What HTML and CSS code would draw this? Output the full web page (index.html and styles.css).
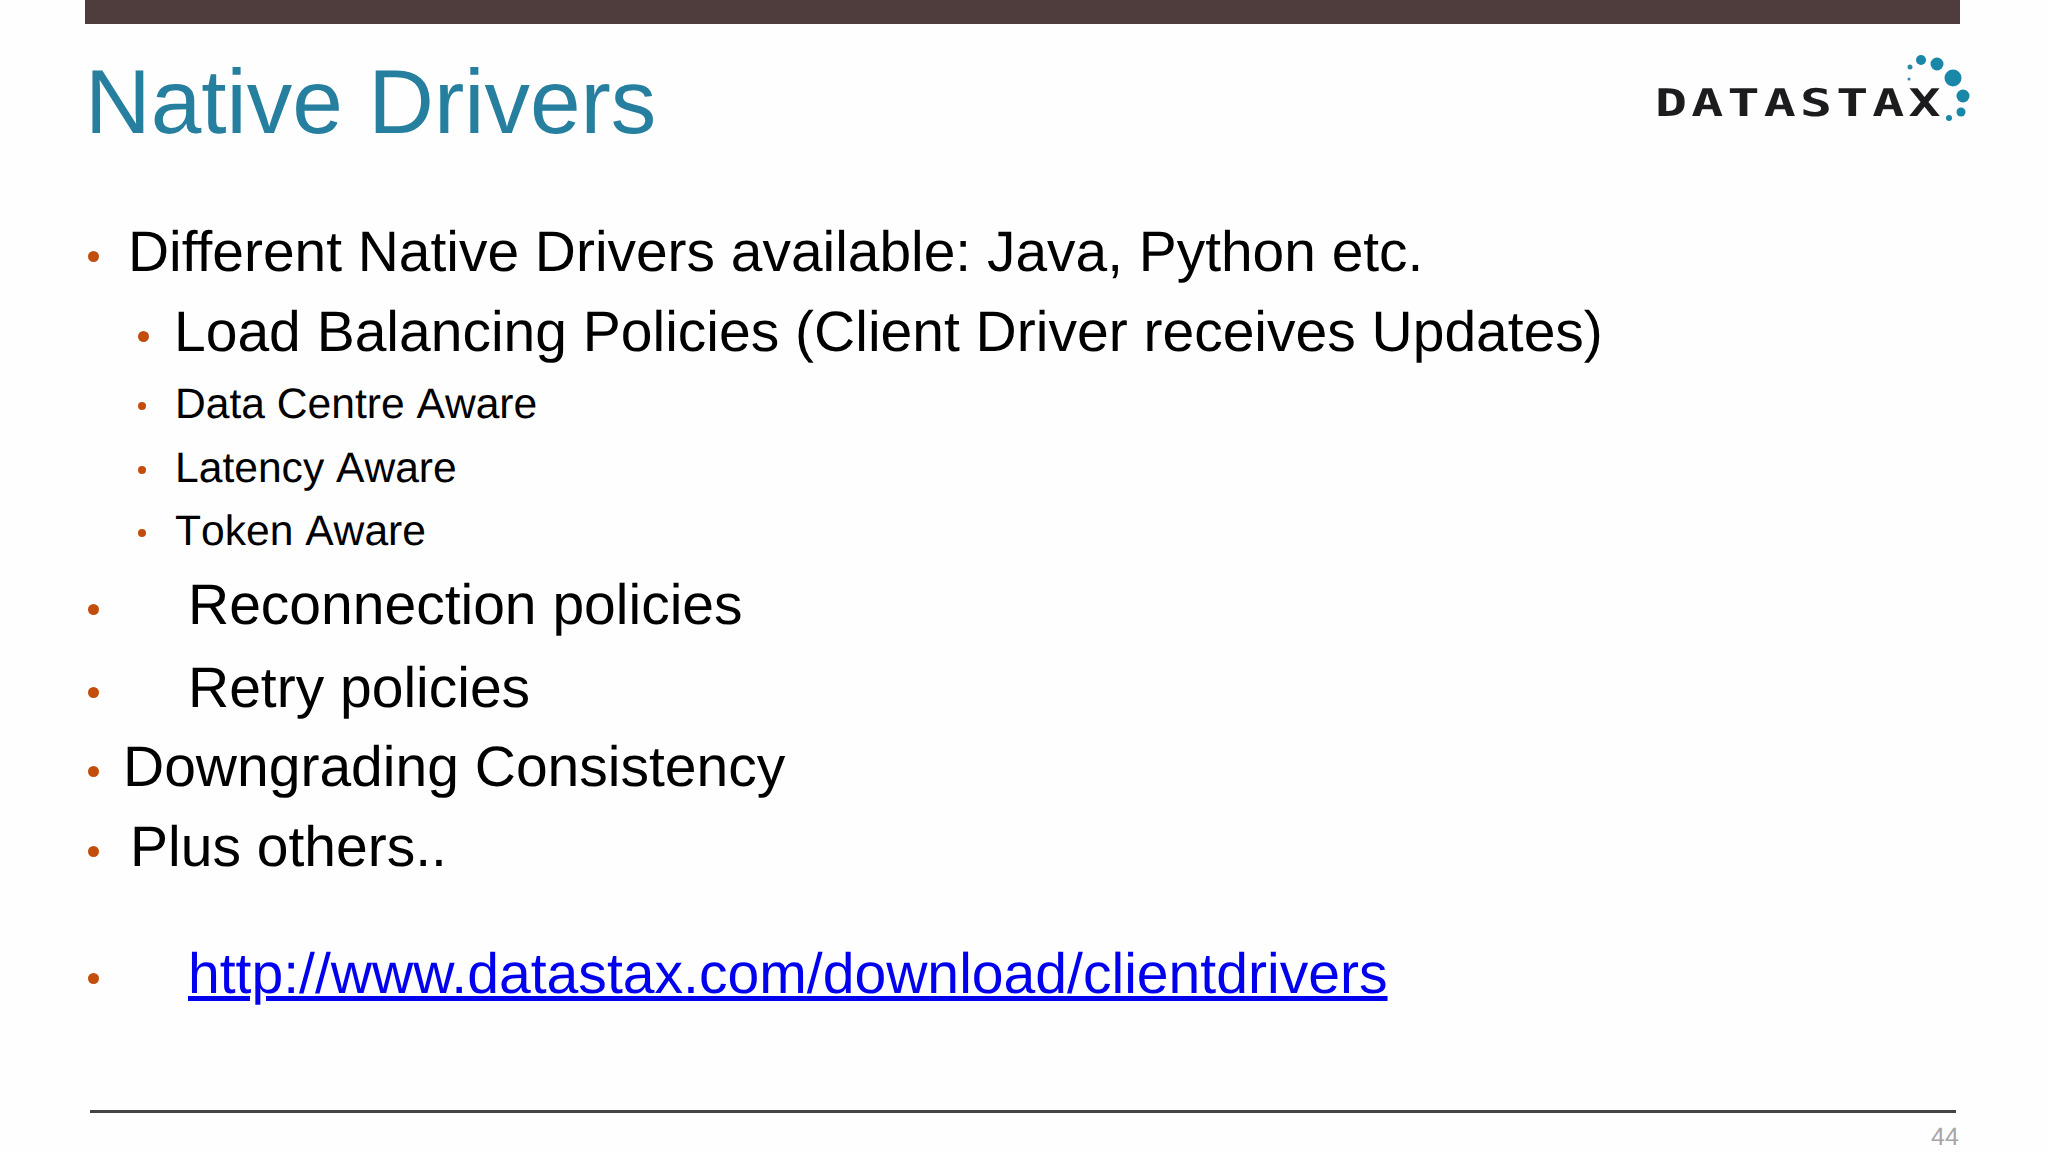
FILE: index.html
```html
<!DOCTYPE html>
<html lang="en">
<head>
<meta charset="utf-8">
<title>Native Drivers</title>
<link rel="stylesheet" href="styles.css">
</head>
<body>
<main class="slide">
  <div class="topbar"></div>
  <header class="head">
    <h1 class="title">Native Drivers</h1>
    <div class="logo">
      <span class="logo-text">DATASTAX</span>
      <svg class="logo-dots" viewBox="0 0 330 80" width="330" height="80" aria-hidden="true">
        <circle cx="260" cy="17" r="2.5" fill="#2a8aa8"/>
        <circle cx="259" cy="29" r="1.5" fill="#2a8aa8"/>
        <circle cx="271" cy="10" r="5" fill="#1b87a8"/>
        <circle cx="287" cy="14" r="6.5" fill="#1b87a8"/>
        <circle cx="303" cy="28" r="8.5" fill="#1b87a8"/>
        <circle cx="313" cy="46" r="6.5" fill="#1b87a8"/>
        <circle cx="311" cy="62" r="4.5" fill="#1b87a8"/>
        <circle cx="299" cy="68" r="3" fill="#1b87a8"/>
      </svg>
    </div>
  </header>
  <ul class="list">
    <li class="row big r1"><span class="dot"></span><span class="t t1">Different Native Drivers available: Java, Python etc.</span></li>
    <li class="row big r2 nested"><span class="dot"></span><span class="t t2">Load Balancing Policies (Client Driver receives Updates)</span></li>
    <li class="row small r3 nested"><span class="dot"></span><span class="t t3">Data Centre Aware</span></li>
    <li class="row small r4 nested"><span class="dot"></span><span class="t t3">Latency Aware</span></li>
    <li class="row small r4b nested"><span class="dot"></span><span class="t t3">Token Aware</span></li>
    <li class="row big r5"><span class="dot"></span><span class="t t4">Reconnection policies</span></li>
    <li class="row big r6"><span class="dot"></span><span class="t t4">Retry policies</span></li>
    <li class="row big r7"><span class="dot"></span><span class="t t5">Downgrading Consistency</span></li>
    <li class="row big r9"><span class="dot"></span><span class="t t6">Plus others..</span></li>
    <li class="row big r8"><span class="dot"></span><a class="t t4 link" href="#">http://www.datastax.com/download/clientdrivers</a></li>
  </ul>
  <footer class="foot">
    <div class="rule"></div>
    <div class="page">44</div>
  </footer>
</main>
</body>
</html>
```
FILE: styles.css
```css
* { box-sizing: border-box; }
html, body { margin: 0; padding: 0; background: #fefefe; }
body { font-family: "Liberation Sans", Arial, sans-serif; color: #000; text-rendering: geometricPrecision; }
.slide { width: 2048px; height: 1152px; overflow: hidden; display: flex; flex-direction: column; }
.topbar { height: 24px; margin: 0 88px 0 85px; background: #4e3d3c; flex: none; }
.head { height: 156px; display: flex; justify-content: space-between; align-items: flex-start; flex: none; padding-left: 85px; }
.title { margin: 33px 0 0; font-size: 91px; line-height: 92px; font-weight: 400; color: #267f9e; }
.logo { position: relative; width: 330px; height: 80px; margin: 26px 68px 0 0; filter: blur(0.6px); }
.logo-text { position: absolute; left: 5px; top: 31px; font-family: "DejaVu Sans Mono", monospace; font-weight: 700; font-size: 38px; line-height: 44px; color: #1c1c1e; letter-spacing: 3px; transform: scaleX(1.4); transform-origin: left center; white-space: nowrap; }
.logo-dots { position: absolute; left: 0; top: 0; }
.list { list-style: none; margin: 0; padding: 0 0 0 88px; flex: none; }
.row { display: flex; align-items: center; white-space: nowrap; }
.big { height: 62px; font-size: 57px; line-height: 62px; }
.small { height: 48px; font-size: 42.6px; line-height: 48px; font-kerning: none; }
.nested { padding-left: 50px; }
.dot { width: 11px; height: 11px; margin-top: 8px; border-radius: 50%; background: #c24e0e; flex: none; }
.small .dot { width: 8px; height: 8px; margin-top: 4px; }
.r1 { margin-top: 41px; font-size: 56.9px; }
.r2 { margin-top: 18px; }
.r3 { margin-top: 17px; }
.r4 { margin-top: 16px; }
.r4b { margin-top: 15px; }
.r5 { margin-top: 19px; }
.r6 { margin-top: 21px; }
.r7 { margin-top: 17px; }
.r9 { margin-top: 18px; }
.r8 { margin-top: 65px; }
.t1 { margin-left: 29px; }
.t2 { margin-left: 25px; }
.t3 { margin-left: 29px; }
.t4 { margin-left: 89px; }
.t5 { margin-left: 24px; }
.t6 { margin-left: 31px; }
.link { color: #0000ee; text-decoration: underline; font-size: 57.1px; }
.foot { flex: 1; margin-top: 105px; position: relative; }
.rule { position: absolute; left: 90px; width: 1866px; top: 0; height: 3px; background: #444; }
.page { position: absolute; left: 1931px; top: 13px; font-size: 25px; line-height: 28px; color: #a6a6a6; }
```
